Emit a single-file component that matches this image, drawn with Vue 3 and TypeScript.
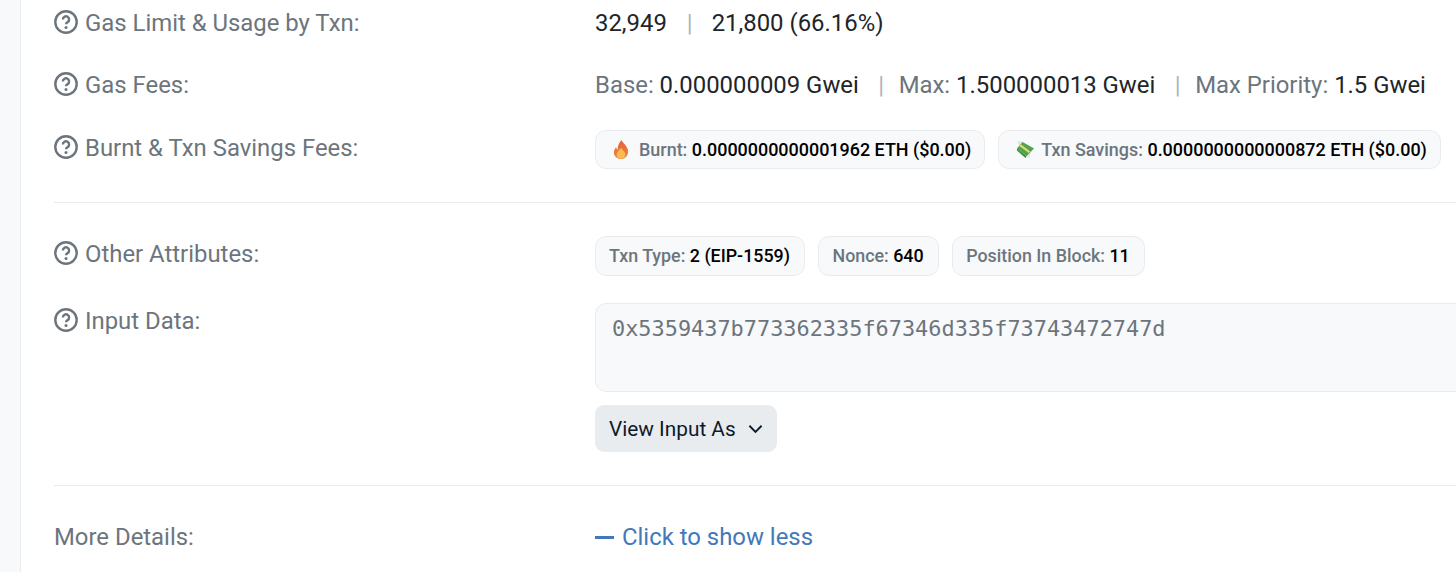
<script setup lang="ts">
const badges = [
  { label: "Txn Type:", value: "2 (EIP-1559)" },
  { label: "Nonce:", value: "640" },
  { label: "Position In Block:", value: "11" },
];
</script>

<template>
  <div class="page">
    <main class="card">
      <section class="row first">
        <div class="label">
          <svg class="help" viewBox="0 0 24 24"><circle cx="12" cy="12" r="10.700" /><path d="M8.900 9.400a3.100 3.100 0 1 1 4.700 2.700c-1 .6-1.600 1.100-1.600 2.200" /><circle class="dot" cx="12" cy="17.400" r="1.500" /></svg>
          <span>Gas Limit &amp; Usage by Txn:</span>
        </div>
        <div class="value">
          <span>32,949</span><span class="sep wide">|</span><span>21,800 (66.16%)</span>
        </div>
      </section>

      <section class="row">
        <div class="label">
          <svg class="help" viewBox="0 0 24 24"><circle cx="12" cy="12" r="10.700" /><path d="M8.900 9.400a3.100 3.100 0 1 1 4.700 2.700c-1 .6-1.600 1.100-1.600 2.200" /><circle class="dot" cx="12" cy="17.400" r="1.500" /></svg>
          <span>Gas Fees:</span>
        </div>
        <div class="value">
          <span class="muted">Base:</span> <span>0.000000009 Gwei</span><span class="sep">|</span><span class="muted">Max:</span> <span>1.500000013 Gwei</span><span class="sep">|</span><span class="muted">Max Priority:</span> <span>1.5 Gwei</span>
        </div>
      </section>

      <section class="row fees">
        <div class="label">
          <svg class="help" viewBox="0 0 24 24"><circle cx="12" cy="12" r="10.700" /><path d="M8.900 9.400a3.100 3.100 0 1 1 4.700 2.700c-1 .6-1.600 1.100-1.600 2.200" /><circle class="dot" cx="12" cy="17.400" r="1.500" /></svg>
          <span>Burnt &amp; Txn Savings Fees:</span>
        </div>
        <div class="badges">
          <span class="badge emoji">
            <svg class="flame" viewBox="0 0 16 20">
              <defs>
                <linearGradient id="fl" x1="0" y1="0" x2="0" y2="1">
                  <stop offset="0" stop-color="#e2603a" />
                  <stop offset="1" stop-color="#ee8a3e" />
                </linearGradient>
              </defs>
              <path fill="url(#fl)" d="M8.500 0c.8 3 6.500 6 7 11.500.4 4.500-3.300 8.500-7.500 8.500S.2 16.500.5 12.500c.2-2.200 1.400-4 2.500-5 .1 1.300.6 2.200 1.500 2.700C4.200 6.500 6 3 8.500 0z" />
              <path fill="#f7bb52" d="M8 8c1 2.500 4.500 4 4.500 7.500 0 2.500-2.200 4.200-4.500 4.200s-4.500-1.700-4.500-4.200C3.500 12.500 7 11 8 8z" />
            </svg>
            <span class="muted">Burnt:</span>&nbsp;<b>0.0000000000001962 ETH ($0.00)</b>
          </span>
          <span class="badge emoji">
            <svg class="cash" viewBox="0 0 20 20">
              <path fill="#dfe4e8" d="M1 1l7 1-4 6z" />
              <path fill="#dfe4e8" d="M14 20l-4-6 6-3z" />
              <path fill="#4fa64a" d="M1 9l6-7 12 7-8 8z" />
              <path fill="#3a8a3c" d="M1 9l10 8-1 2-9-8z" />
              <path fill="#efd27a" d="M5 4.500l10 7.500-1.500 1.700-10-7.500z" />
            </svg>
            <span class="muted">Txn Savings:</span>&nbsp;<b>0.0000000000000872 ETH ($0.00)</b>
          </span>
        </div>
      </section>

      <hr class="divider top" />

      <section class="row attrs">
        <div class="label">
          <svg class="help" viewBox="0 0 24 24"><circle cx="12" cy="12" r="10.700" /><path d="M8.900 9.400a3.100 3.100 0 1 1 4.700 2.700c-1 .6-1.600 1.100-1.600 2.200" /><circle class="dot" cx="12" cy="17.400" r="1.500" /></svg>
          <span>Other Attributes:</span>
        </div>
        <div class="badges">
          <span v-for="b in badges" :key="b.label" class="badge">
            <span class="muted">{{ b.label }}</span>&nbsp;<b>{{ b.value }}</b>
          </span>
        </div>
      </section>

      <section class="row input-row">
        <div class="label">
          <svg class="help" viewBox="0 0 24 24"><circle cx="12" cy="12" r="10.700" /><path d="M8.900 9.400a3.100 3.100 0 1 1 4.700 2.700c-1 .6-1.600 1.100-1.600 2.200" /><circle class="dot" cx="12" cy="17.400" r="1.500" /></svg>
          <span>Input Data:</span>
        </div>
        <div class="input-col">
          <div class="input-box">0x5359437b773362335f67346d335f73743472747d</div>
          <button class="view-btn">
            View Input As
            <svg class="chev" viewBox="0 0 16 10"><path d="M1.500 1.500l6.500 6.500 6.500-6.500" /></svg>
          </button>
        </div>
      </section>

      <hr class="divider bottom" />

      <section class="row more">
        <div class="label plain">More Details:</div>
        <a class="more-link"><i class="dash"></i>Click to show less</a>
      </section>
    </main>
  </div>
</template>

<style>
html, body {
  margin: 0;
  background: #fff;
}
</style>

<style scoped>
.page {
  width: 1456px;
  height: 572px;
  overflow: hidden;
  background: #f8f9fb;
  padding-left: 20px;
  box-sizing: border-box;
  font-family: Roboto, "Liberation Sans", sans-serif;
  font-size: 23.900px;
  color: #212529;
}

.card {
  width: 1500px;
  height: 572px;
  background: #fff;
  border-left: 1px solid #e9ecef;
  padding: 0 0 0 33px;
  box-sizing: border-box;
}

.row {
  display: flex;
  align-items: flex-start;
}

.row.first {
  padding-top: 8px;
}

.row + .row {
  margin-top: 32px;
}

.label {
  width: 541px;
  flex: none;
  display: flex;
  align-items: center;
  gap: 7px;
  color: #6c757d;
  height: 30px;
  line-height: 30px;
}

.help {
  width: 24px;
  height: 24px;
  flex: none;
  margin-top: -2px;
  fill: none;
  stroke: #6c757d;
  stroke-width: 2.400;
}

.help .dot {
  fill: #6c757d;
  stroke: none;
}

.value {
  line-height: 30px;
  white-space: nowrap;
}

.muted {
  color: #6c757d;
}

.sep {
  color: #adb5bd;
  margin: 0 14.500px 0 19.500px;
}

.sep.wide {
  margin: 0 19px 0 20px;
}

.badges {
  display: flex;
  gap: 13px;
  white-space: nowrap;
}

.badge {
  display: inline-flex;
  align-items: center;
  height: 39px;
  box-sizing: border-box;
  padding: 0 13px 0 14px;
  background: #f8f9fa;
  border: 1px solid #e9ecef;
  border-radius: 11px;
  font-size: 17.950px;
  font-weight: 500;
}

.badge.emoji {
  padding-left: 17px;
}

.badge b {
  font-weight: 500;
  color: #000;
}

.flame {
  width: 16px;
  height: 19px;
  margin-right: 10px;
}

.cash {
  width: 19px;
  height: 19px;
  margin-right: 6px;
}

.row.fees {
  margin-top: 30px;
}

.row.fees .label {
  margin-top: 3px;
}

.divider {
  height: 1px;
  border: 0;
  background: #e9ecef;
  margin: 0;
}

.divider.top {
  margin-top: 33px;
}

.row.attrs {
  margin-top: 33px;
}

.row.attrs .label {
  margin-top: 3px;
}

.row.attrs .badges {
  gap: 13.500px;
}

.row.attrs .badge {
  height: 40px;
  padding: 0 14px 2px 13px;
  font-size: 17.850px;
}

.row.input-row {
  margin-top: 27px;
}

.row.input-row .label {
  margin-top: 3px;
}

.input-col {
  flex: 1;
  display: flex;
  flex-direction: column;
  align-items: flex-start;
}

.input-box {
  width: 100%;
  height: 89px;
  box-sizing: border-box;
  padding: 10px 16px;
  background: #f8f9fa;
  border: 1px solid #e9ecef;
  border-radius: 11px;
  font-family: "DejaVu Sans Mono", monospace;
  font-size: 21.900px;
  line-height: 30px;
  color: #6c757d;
}

.view-btn {
  margin-top: 13px;
  height: 47px;
  padding: 0 14px;
  border: 0;
  border-radius: 9px;
  background: #e9ecef;
  color: #0d1a2b;
  font: inherit;
  font-size: 20.800px;
  display: flex;
  align-items: center;
  gap: 12px;
}

.chev {
  width: 15px;
  height: 10px;
  fill: none;
  stroke: #0d1a2b;
  stroke-width: 2;
}

.divider.bottom {
  margin-top: 33px;
}

.row.more {
  margin-top: 36px;
}

.label.plain {
  display: block;
}

.more-link {
  color: #4179ba;
  line-height: 30px;
  display: flex;
  align-items: center;
}

.dash {
  display: inline-block;
  width: 19px;
  height: 3px;
  background: #4179ba;
  margin-right: 8px;
}
</style>
